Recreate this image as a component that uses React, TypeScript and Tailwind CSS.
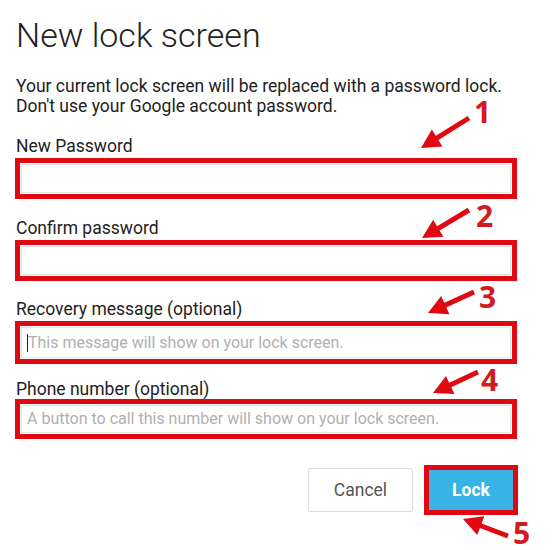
import React from "react";

const RED = "#e00912";
const DIGIT = "#d21a22";

type Arrow = { tail: [number, number]; tip: [number, number] };

function arrowPoints(a: Arrow, shaft = 5, headLen = 19, headW = 20) {
  const [tx, ty] = a.tail;
  const [px, py] = a.tip;
  const dx = px - tx;
  const dy = py - ty;
  const len = Math.hypot(dx, dy);
  const ux = dx / len;
  const uy = dy / len;
  const nx = -uy;
  const ny = ux;
  const bx = px - ux * headLen;
  const by = py - uy * headLen;
  const pts: [number, number][] = [
    [tx + nx * shaft / 2, ty + ny * shaft / 2],
    [bx + nx * shaft / 2, by + ny * shaft / 2],
    [bx + nx * headW / 2, by + ny * headW / 2],
    [px, py],
    [bx - nx * headW / 2, by - ny * headW / 2],
    [bx - nx * shaft / 2, by - ny * shaft / 2],
    [tx - nx * shaft / 2, ty - ny * shaft / 2],
  ];
  return pts.map((p) => p.join(",")).join(" ");
}

const arrows: { a: Arrow; digit: string; dx: number; dy: number }[] = [
  { a: { tail: [469, 118], tip: [421, 148] }, digit: "1", dx: 474, dy: 123 },
  { a: { tail: [469, 210], tip: [422, 238] }, digit: "2", dx: 476, dy: 227 },
  { a: { tail: [474, 292], tip: [428, 313] }, digit: "3", dx: 479, dy: 308 },
  { a: { tail: [478, 372], tip: [433, 393] }, digit: "4", dx: 481, dy: 391 },
  { a: { tail: [508, 536], tip: [463, 519] }, digit: "5", dx: 513, dy: 544 },
];

function Field({
  label,
  placeholder,
  labelMt,
  boxMt,
  h,
  cursor,
}: {
  label: string;
  placeholder?: string;
  labelMt: string;
  boxMt: string;
  h: string;
  cursor?: boolean;
}) {
  return (
    <div className={labelMt}>
      <div className="pl-px text-[17.5px] leading-[20px] text-[#222]">{label}</div>
      <div className={`${boxMt} w-[502px] ${h} border-[5px] border-[#e00912] bg-white p-px`}>
        <div className="h-full border border-[#e4e4e4] flex items-center pl-[5px] text-[16px] text-[#b0b0b0]">
          {cursor && <span className="inline-block w-px h-[18px] bg-[#222]" />}
          {placeholder}
        </div>
      </div>
    </div>
  );
}

export default function App() {
  return (
    <div
      className="relative w-[556px] h-[550px] bg-white overflow-hidden"
      style={{ fontFamily: "Roboto, 'Liberation Sans', sans-serif" }}
    >
      <div className="pl-[15px] pt-[13px]">
        <h1 className="pl-px text-[34px] leading-[44px] font-light text-[#222]">New lock screen</h1>
        <div className="pl-px mt-[19px] text-[17.5px] leading-[20px] text-[#222]">
          <div>Your current lock screen will be replaced with a password lock.</div>
          <div>Don't use your Google account password.</div>
        </div>
        <Field label="New Password" labelMt="mt-[20px]" boxMt="mt-[2px]" h="h-[41px]" />
        <Field label="Confirm password" labelMt="mt-[19px]" boxMt="mt-[2px]" h="h-[41px]" />
        <Field
          label="Recovery message (optional)"
          placeholder="This message will show on your lock screen."
          labelMt="mt-[18px]"
          boxMt="mt-[2px]"
          h="h-[43px]"
          cursor
        />
        <Field
          label="Phone number (optional)"
          placeholder="A button to call this number will show on your lock screen."
          labelMt="mt-[15px]"
          boxMt="mt-0"
          h="h-[40px]"
        />
        <div className="mt-[26px] flex items-center gap-[11px] pl-[293px]">
          <button className="w-[105px] h-[44px] border border-[#dcdcdc] rounded-[2px] bg-white text-[17.5px] text-[#555]">
            Cancel
          </button>
          <div className="w-[94px] h-[50px] border-[5px] border-[#e00912] bg-white">
            <button className="w-full h-full bg-[#38b3e6] text-white font-bold text-[17.5px]">Lock</button>
          </div>
        </div>
      </div>

      <svg className="absolute inset-0 pointer-events-none" width={556} height={550}>
        {arrows.map((x, i) => (
          <g key={i}>
            <polygon points={arrowPoints(x.a)} fill={RED} />
            <text
              x={x.dx}
              y={x.dy}
              fill={DIGIT}
              fontFamily="'Open Sans', 'Liberation Sans', sans-serif"
              fontWeight={700}
              fontSize={30}
            >
              {x.digit}
            </text>
          </g>
        ))}
      </svg>
    </div>
  );
}
